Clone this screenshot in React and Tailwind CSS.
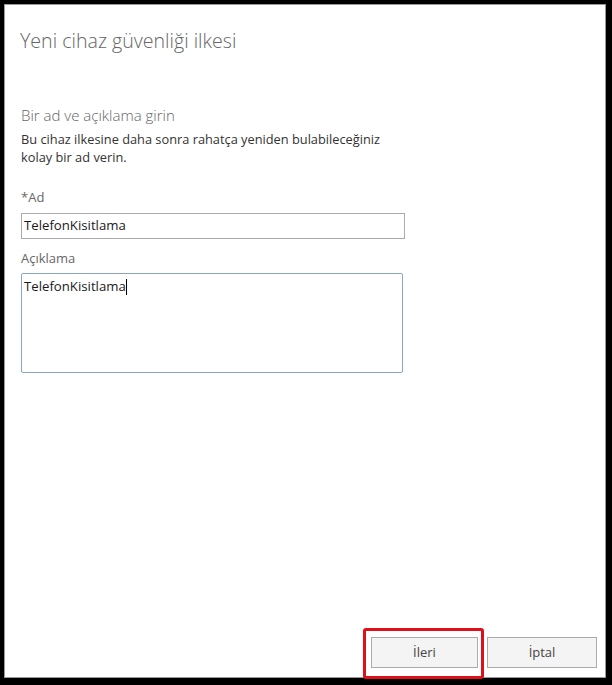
import React from 'react';

const font = { fontFamily: '"Open Sans", "Noto Sans", "DejaVu Sans", sans-serif' };

function Field({ label, children }) {
  return (
    <div className="flex flex-col">
      <label className="text-[13px] leading-[18px] text-[#666]">{label}</label>
      {children}
    </div>
  );
}

export default function App() {
  return (
    <div className="w-[612px] h-[685px] bg-black pl-[4px] pt-[4px] pr-[6px] pb-[7px]" style={font}>
      <div className="h-full border border-[#9a9a9a] bg-white flex flex-col">
        <h1 className="ml-[15px] mt-[24px] text-[19.6px] leading-[24px] font-light text-[#666]">
          Yeni cihaz güvenliği ilkesi
        </h1>

        <div className="ml-[16px] mt-[52px] w-[384px] flex flex-col">
          <h2 className="text-[15px] leading-[20px] font-light text-[#666]">Bir ad ve açıklama girin</h2>
          <p className="mt-[5px] text-[12.8px] leading-[18px] text-[#333]">
            Bu cihaz ilkesine daha sonra rahatça yeniden bulabileceğiniz kolay bir ad verin.
          </p>

          <div className="mt-[22px]">
            <Field label="*Ad">
              <div className="mt-[7px] h-[26px] w-[384px] border border-[#ababab] px-[2px] flex items-center text-[13.2px] text-[#1a1a1a]">
                TelefonKisitlama
              </div>
            </Field>
          </div>

          <div className="mt-[10px]">
            <Field label="Açıklama">
              <div className="mt-[6px] h-[100px] w-[382px] border border-[#8ea3c8] rounded-[2px] px-[2px] pt-[3px] text-[13.2px] leading-[18px] text-[#1a1a1a]">
                TelefonKisitlama<span className="inline-block w-px h-[16px] bg-black align-middle" />
              </div>
            </Field>
          </div>
        </div>

        <div className="mt-auto mb-[9px] mr-[8px] flex justify-end gap-[9px]">
          <div className="relative">
            <button className="w-[107px] h-[31px] border border-[#ababab] bg-[#f4f4f4] text-[13px] text-[#444]">
              İleri
            </button>
            <div className="absolute -left-[8px] -top-[9px] -right-[6px] -bottom-[11px] border-[3px] border-[#e0101a] rounded-[3px] pointer-events-none" />
          </div>
          <button className="w-[110px] h-[31px] border border-[#ababab] bg-[#f4f4f4] text-[13px] text-[#444]">
            İptal
          </button>
        </div>
      </div>
    </div>
  );
}
